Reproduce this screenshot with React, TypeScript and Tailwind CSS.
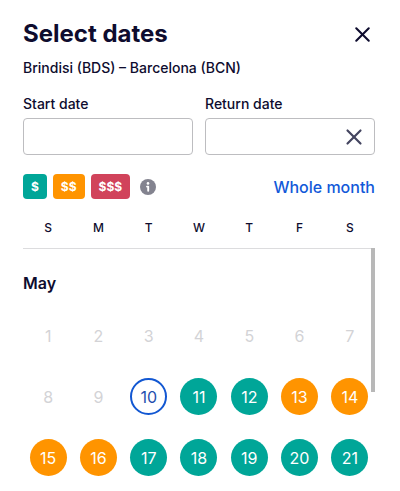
import { X } from "lucide-react";
import clsx from "clsx";

type Price = "low" | "mid" | "high";

const weekdays = [
  { short: "S", name: "Sunday" },
  { short: "M", name: "Monday" },
  { short: "T", name: "Tuesday" },
  { short: "W", name: "Wednesday" },
  { short: "T", name: "Thursday" },
  { short: "F", name: "Friday" },
  { short: "S", name: "Saturday" },
];

const weeks = [
  [1, 2, 3, 4, 5, 6, 7],
  [8, 9, 10, 11, 12, 13, 14],
  [15, 16, 17, 18, 19, 20, 21],
];

const today = 10;
const midPriceDays = [13, 14, 15, 16];

const priceColor: Record<Price, string> = {
  low: "bg-[#00a698]",
  mid: "bg-[#ff9400]",
  high: "bg-[#d1435b]",
};

const legend: { label: string; price: Price }[] = [
  { label: "$", price: "low" },
  { label: "$$", price: "mid" },
  { label: "$$$", price: "high" },
];

const InfoIcon = () => (
  <svg viewBox="0 0 16 16" className="size-4" aria-hidden="true">
    <circle cx="8" cy="8" r="8" fill="#83838f" />
    <circle cx="8" cy="4.4" r="1.3" fill="#fff" />
    <path
      d="M7 7.6h1.2v4.2"
      fill="none"
      stroke="#fff"
      strokeWidth="1.9"
      strokeLinecap="round"
      strokeLinejoin="round"
    />
  </svg>
);

const DayButton = ({ day }: { day: number }) => {
  const isPast = day < today;
  const isToday = day === today;
  const price: Price = midPriceDays.includes(day) ? "mid" : "low";

  return (
    <button
      type="button"
      disabled={isPast}
      className={clsx(
        "mx-auto flex size-[37px] items-center justify-center rounded-full text-base",
        isPast && "text-[#d3d3d6]",
        isToday && "border-2 border-[#1257d2] text-[#1f4fae]",
        !isPast && !isToday && "text-white",
        !isPast && !isToday && priceColor[price]
      )}
    >
      {day}
    </button>
  );
};

const DateFields = () => {
  return (
    <div className="mt-4 grid grid-cols-2 gap-3">
      <div>
        <label htmlFor="start-date" className="block text-sm font-medium">
          Start date
        </label>
        <input
          id="start-date"
          type="text"
          className="mt-1 block h-[37px] w-full rounded-sm border border-[#bdbdc0] px-3 text-base"
        />
      </div>
      <div>
        <label htmlFor="return-date" className="block text-sm font-medium">
          Return date
        </label>
        <div className="relative mt-1">
          <input
            id="return-date"
            type="text"
            className="block h-[37px] w-full rounded-sm border border-[#bdbdc0] pr-10 pl-3 text-base"
          />
          {/* Clear the return date */}
          <button
            type="button"
            aria-label="Clear return date"
            className="absolute inset-y-0 right-2 flex items-center text-[#444560]"
          >
            <X size={26} strokeWidth={2} />
          </button>
        </div>
      </div>
    </div>
  );
};

const Calendar = () => {
  return (
    <div className="relative mt-[9px]">
      <table className="w-full table-fixed border-collapse">
        <thead>
          <tr className="h-10 border-b border-[#dcdcde]">
            {weekdays.map((weekday) => (
              <th
                key={weekday.name}
                abbr={weekday.name}
                scope="col"
                className="text-xs font-medium"
              >
                {weekday.short}
              </th>
            ))}
          </tr>
        </thead>
        <tbody>
          <tr className="h-[57px]">
            <th
              colSpan={7}
              scope="rowgroup"
              className="pt-3 text-left text-base font-semibold"
            >
              May
            </th>
          </tr>
          {weeks.map((week) => (
            <tr key={week[0]} className="h-[61px]">
              {week.map((day) => (
                <td key={day} className="p-0">
                  <DayButton day={day} />
                </td>
              ))}
            </tr>
          ))}
        </tbody>
      </table>

      {/* Scroll thumb */}
      <div className="absolute top-10 right-0 h-36 w-1 bg-[#b8b8b8]" />
    </div>
  );
};

export default function App() {
  return (
    <main className="bg-white pt-4 pr-[25px] pl-[23px] font-['Inter','Liberation_Sans',sans-serif] text-[#0e0c2e]">
      <header className="flex h-9 items-center justify-between">
        <h1 className="text-2xl font-bold">Select dates</h1>
        <button type="button" aria-label="Close">
          <X size={25} strokeWidth={2} />
        </button>
      </header>
      <p className="mt-[6px] text-sm font-medium">
        Brindisi (BDS) – Barcelona (BCN)
      </p>

      <DateFields />

      <div className="mt-[19px] flex h-[25px] items-center justify-between">
        <div className="flex items-center gap-[6px]">
          {legend.map(({ label, price }) => (
            <span
              key={price}
              className={clsx(
                "flex h-[25px] items-center rounded-sm px-2 text-xs font-bold text-white",
                priceColor[price]
              )}
            >
              {label}
            </span>
          ))}
          <button type="button" aria-label="Price information" className="ml-1">
            <InfoIcon />
          </button>
        </div>
        <a href="#whole-month" className="text-base font-medium text-[#1259d9]">
          Whole month
        </a>
      </div>

      <Calendar />
    </main>
  );
}
